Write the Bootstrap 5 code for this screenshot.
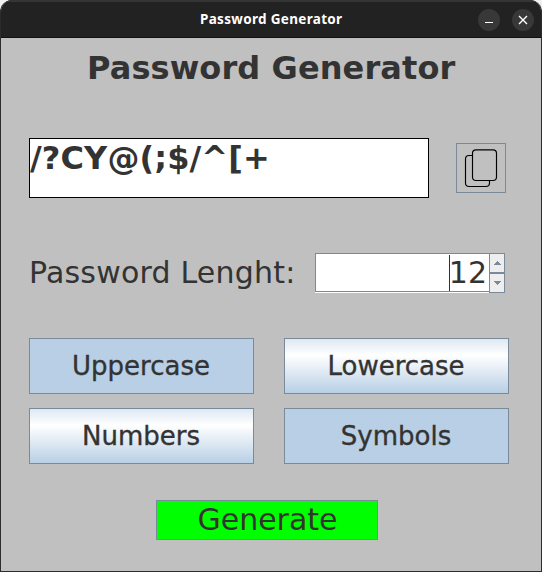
<!DOCTYPE html>
<html lang="en">
<head>
<meta charset="utf-8">
<meta name="viewport" content="width=device-width, initial-scale=1">
<title>Password Generator</title>
<link href="https://cdn.jsdelivr.net/npm/bootstrap@5.3.0/dist/css/bootstrap.min.css" rel="stylesheet">
<style>
body{background:#f0f0f0;font-family:"DejaVu Sans",sans-serif;color:#333;overflow:hidden}
.window{width:542px;height:572px;background:#c0c0c0;border:1px solid #2c2c2c;border-top:0;border-radius:12px 12px 0 0;overflow:hidden}
.titlebar{height:38px;margin:0 -1px;background:#222;border-top:2px solid #353535;border-bottom:1px solid #111;color:#fff;font:bold 13.5px/35px "Noto Sans",sans-serif;letter-spacing:.32px;padding-right:8px}
.wintitle{width:146px;margin-left:200px;white-space:nowrap}
.winbtn{width:22px;height:22px;background:#383838;border:0;border-radius:50%;padding:0;display:block}
.winbtn svg,.copy svg{display:block}
.content{padding:0 32px 0 28px}
.heading{font-size:32px;line-height:38px;font-weight:bold;letter-spacing:.1px;margin:11px -32px 0 -28px;padding-left:86px;white-space:nowrap}
.output{width:400px;height:60px;margin-top:51px;background:#fff;border:1px solid #000;font-size:32px;line-height:38px;font-weight:bold;letter-spacing:.12px;white-space:nowrap}
.copy{width:50px;height:50px;margin:56px 3px 0 0;background:none;border:1px solid #7a8a99;padding:0}
.length-row{height:40px;margin-top:55px}
.length-label{font-size:30px;line-height:40px;letter-spacing:.2px;white-space:nowrap}
.spinner{width:190px;height:40px;margin-right:4px}
.field{width:174px;height:39px;background:#fff;border:1px solid #7a8a99;border-right:0;box-shadow:0 1px #fff;font-size:30px;line-height:38px;padding-right:2px}
.digits{margin-left:-1px;position:relative}
.caret{width:1px;height:36px;background:#333;margin-top:1px}
.step{width:16px;height:20px;border:1px solid #7a8a99;background:#eee;padding:0;display:block;border-radius:0}
.step svg{display:block}
.options{display:grid;grid-template-columns:225px 225px;gap:14px 30px;margin-top:45px}
.opt{height:56px;padding:0 1px 0 0;border:1px solid #7a8a99;border-radius:0;color:#333;font-size:26px;line-height:54px;-webkit-text-stroke:.35px #333;background:linear-gradient(#dde8f3 0%,#fff 30%,#b8cfe5 100%)}
.opt.chosen{background:#b8cfe5}
.generate{width:222px;height:40px;margin:36px 0 0 127px;padding:0 0 0 1px;border:1px solid #7a8a99;border-radius:0;background:#0f0;color:#333;font-size:30px;line-height:38px;display:block}
</style>
</head>
<body>
<main class="window">
<header class="titlebar d-flex align-items-center">
<div class="wintitle">Password Generator</div>
<div class="d-flex ms-auto" style="gap:12px">
<button class="winbtn" aria-label="Minimize"><svg width="22" height="22"><path d="M7 13.500h8" stroke="#fff"/></svg></button>
<button class="winbtn" aria-label="Close"><svg width="22" height="22"><path d="M7 7l8 8M15 7l-8 8" stroke="#fff" stroke-width="1.4"/></svg></button>
</div>
</header>
<div class="content">
<h1 class="heading mb-0"><span>Password Generator</span></h1>
<div class="d-flex justify-content-between">
<div class="output">/?CY@(;$/^[+</div>
<button class="copy" aria-label="Copy"><svg width="48" height="48" fill="none" stroke="#000" stroke-width="1.15"><path d="M15.500 11.500h-3.500q-3.500 0-3.500 3.500v24q0 3.500 3.500 3.500h17q3.500 0 3.500-3.500v-2.500"/><rect x="15.500" y="5.800" width="24" height="30.700" rx="3.500"/></svg></button>
</div>
<div class="length-row d-flex justify-content-between">
<div class="length-label"><span>Password Lenght:</span></div>
<div class="spinner d-flex">
<div class="field d-flex justify-content-end"><i class="caret"></i><span class="digits">12</span></div>
<div>
<button class="step" aria-label="Increase"><svg width="14" height="18" shape-rendering="crispEdges"><path d="M3 11h8l-4-4z" fill="#7a8a99"/></svg></button>
<button class="step" aria-label="Decrease"><svg width="14" height="18" shape-rendering="crispEdges"><path d="M3 7h8l-4 4z" fill="#7a8a99"/></svg></button>
</div>
</div>
</div>
<div class="options">
<button class="btn opt chosen">Uppercase</button>
<button class="btn opt">Lowercase</button>
<button class="btn opt">Numbers</button>
<button class="btn opt chosen">Symbols</button>
</div>
<button class="btn generate">Generate</button>
</div>
</main>
<script src="https://cdn.jsdelivr.net/npm/bootstrap@5.3.0/dist/js/bootstrap.bundle.min.js"></script>
</body>
</html>
